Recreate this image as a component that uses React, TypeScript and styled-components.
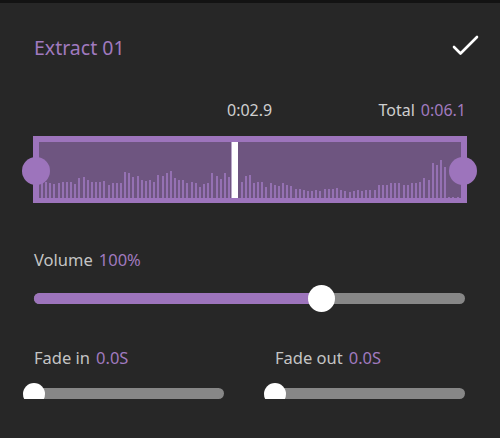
import React from "react";
import styled, { createGlobalStyle } from "styled-components";

const Global = createGlobalStyle`
  html, body { margin: 0; padding: 0; background: #272727; }
  body { font-family: "Noto Sans", "Open Sans", sans-serif; -webkit-font-smoothing: antialiased; }
`;

const PURPLE = "#a07abf";

const TopStrip = styled.div`
  height: 3px;
  background: #131313;
`;

const Panel = styled.div`
  padding: 0 33px;
  display: flex;
  flex-direction: column;
`;

const Header = styled.div`
  height: 34px;
  margin-top: 27px;
  display: flex;
  align-items: center;
  justify-content: space-between;
`;

const Title = styled.div`
  color: ${PURPLE};
  font-size: 19.5px;
  padding-left: 1px;
`;

const Check = styled.svg`
  width: 28px;
  height: 24px;
  margin-right: -13px;
`;

const TimeRow = styled.div`
  margin-top: 36px;
  height: 20px;
  display: flex;
  align-items: center;
  font-size: 16px;
  color: #cfcfcf;
`;

const Current = styled.span<{ $offset: number }>`
  margin-left: ${(p) => p.$offset}px;
`;

const Total = styled.span`
  margin-left: auto;
  margin-right: 1px;
  color: #cfcfcf;
`;

const Accent = styled.span`
  color: ${PURPLE};
  margin-left: 6px;
`;

const Wave = styled.div`
  position: relative;
  margin-top: 16px;
  height: 67px;
  box-sizing: border-box;
  border: 6px solid #9d74bc;
  border-bottom-width: 5px;
  background: #6e5580;
  display: flex;
  align-items: flex-end;
  padding: 0 1px 0 2px;
`;

const Bars = styled.div`
  flex: 1;
  height: 100%;
  display: flex;
  align-items: flex-end;
  justify-content: space-between;
`;

const Bar = styled.div`
  width: 2px;
  background: #9571b3;
`;

const Playhead = styled.div`
  position: absolute;
  left: 193px;
  top: 0;
  bottom: 0;
  width: 6px;
  background: #fff;
  box-shadow: -1px 0 0 #b9a6c8;
`;

const Handle = styled.div<{ $side: "left" | "right" }>`
  position: absolute;
  top: 50%;
  ${(p) => (p.$side === "left" ? "left: -17px;" : "right: -16px;")}
  width: 28px;
  height: 28px;
  margin-top: -13px;
  border-radius: 50%;
  background: #9d74bc;
`;

const Label = styled.div`
  font-size: 16.5px;
  color: #c4c4c4;
  height: 20px;
  display: flex;
  align-items: center;
  padding-left: 1px;
`;

const LabelValue = styled.span`
  color: ${PURPLE};
  margin-left: 6px;
`;

const VolumeBlock = styled.div`
  margin-top: 46px;
  display: flex;
  flex-direction: column;
`;

const Track = styled.div`
  position: relative;
  height: 11px;
  border-radius: 6px;
  background: #878787;
  margin: 0 2px 0 1px;
`;

const Fill = styled.div`
  position: absolute;
  left: 0;
  top: 0;
  bottom: 0;
  border-radius: 6px;
  background: #9d74bc;
`;

const Thumb = styled.div<{ $size: number }>`
  position: absolute;
  top: 50%;
  width: ${(p) => p.$size}px;
  height: ${(p) => p.$size}px;
  margin-top: ${(p) => -p.$size / 2}px;
  margin-left: ${(p) => -p.$size / 2}px;
  border-radius: 50%;
  background: #fff;
`;

const VolumeTrackWrap = styled.div`
  margin-top: 24px;
`;

const FadeRow = styled.div`
  margin-top: 43px;
  display: grid;
  grid-template-columns: 1fr 1fr;
  column-gap: 48px;
`;

const FadeCol = styled.div`
  display: flex;
  flex-direction: column;
`;

const FadeTrackWrap = styled.div`
  margin-top: 21px;
`;

const heights = [
  14.7, 16.3, 15, 14.3, 14.7, 16.3, 15.7, 15.7, 14.3, 19.7, 21.3, 18, 16.3, 15.7, 16.3, 17, 13.3, 15.3,
  14.7, 15.3, 26.3, 25.3, 21.3, 22, 17.7, 16.7, 17.7, 15.7, 23.3, 21.7, 24.7, 27.3, 20.3, 18, 18.3, 15.3,
  16.3, 15, 11.3, 14.3, 15, 25.3, 21.7, 18.7, 24.7, 21.3, 18, 16.7, 16, 21.7, 23.3, 15, 16.3, 16, 11.3,
  15, 13.3, 12, 15, 13.3, 12, 9.3, 9.3, 8, 6.7, 6.7, 8, 6.7, 9.3, 9.3, 9.3, 10, 8, 6.7, 6, 6.7, 8, 6.7,
  8, 8, 8, 13.3, 13.3, 13.3, 15, 14.7, 14.7, 13.3, 12.7, 15, 15, 15.7, 20, 18, 34.7, 33, 38, 30.7, 1, 1, 1,
];

function Slider({ value, thumb }: { value: number; thumb: number }) {
  return (
    <Track>
      <Fill style={{ width: `${value}%` }} />
      <Thumb $size={thumb} style={{ left: `${value}%` }} />
    </Track>
  );
}

export default function App() {
  return (
    <>
      <Global />
      <TopStrip />
      <Panel>
        <Header>
          <Title>Extract 01</Title>
          <Check viewBox="0 0 28 24">
            <path d="M2 12 L8.5 18.5 L25 2" fill="none" stroke="#fff" strokeWidth="2.6" strokeLinecap="round" strokeLinejoin="round" />
          </Check>
        </Header>
        <TimeRow>
          <Current $offset={194}>0:02.9</Current>
          <Total>
            Total<Accent>0:06.1</Accent>
          </Total>
        </TimeRow>
        <Wave>
          <Bars>
            {heights.map((h, i) => (
              <Bar key={i} style={{ height: `${h}px` }} />
            ))}
          </Bars>
          <Playhead />
          <Handle $side="left" />
          <Handle $side="right" />
        </Wave>
        <VolumeBlock>
          <Label>
            Volume<LabelValue>100%</LabelValue>
          </Label>
          <VolumeTrackWrap>
            <Slider value={66.75} thumb={27} />
          </VolumeTrackWrap>
        </VolumeBlock>
        <FadeRow>
          <FadeCol>
            <Label>
              Fade in<LabelValue>0.0S</LabelValue>
            </Label>
            <FadeTrackWrap>
              <Slider value={0} thumb={22} />
            </FadeTrackWrap>
          </FadeCol>
          <FadeCol>
            <Label>
              Fade out<LabelValue>0.0S</LabelValue>
            </Label>
            <FadeTrackWrap>
              <Slider value={0} thumb={22} />
            </FadeTrackWrap>
          </FadeCol>
        </FadeRow>
      </Panel>
    </>
  );
}
